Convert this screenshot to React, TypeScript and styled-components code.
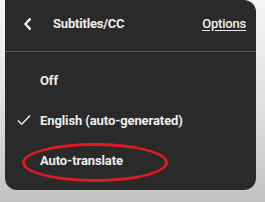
import React from "react";
import styled, { createGlobalStyle } from "styled-components";

const Global = createGlobalStyle`
  html, body { margin: 0; padding: 0; }
  body {
    width: 265px;
    height: 202px;
    overflow: hidden;
    background: linear-gradient(180deg, #f6f6f6 0%, #dedede 55%, #c2c2c2 100%);
    font-family: Roboto, "Liberation Sans", Arial, sans-serif;
  }
`;

const Stage = styled.div`
  width: 265px;
  height: 202px;
  box-sizing: border-box;
  padding: 0 9px 12px 5px;
  display: flex;
  flex-direction: column;
  position: relative;
`;

const Panel = styled.div`
  flex: 1;
  background: #2a2a2a;
  border-radius: 0 12px 12px 12px;
  display: flex;
  flex-direction: column;
  color: #eeeeee;
`;

const Header = styled.div`
  height: 52px;
  box-sizing: border-box;
  display: flex;
  align-items: center;
  padding: 0 10px 4px 18px;
  border-bottom: 1px solid #5a5a5a;
`;

const Back = styled.span`
  width: 20px;
  display: flex;
  align-items: center;
  margin-right: 10px;
`;

const Title = styled.span`
  flex: 1;
  font-size: 13px;
  font-weight: 700;
  letter-spacing: -0.2px;
`;

const Options = styled.span`
  font-size: 13px;
  font-weight: 500;
  letter-spacing: -0.2px;
  text-decoration: underline;
  text-underline-offset: 2px;
`;

const List = styled.div`
  display: flex;
  flex-direction: column;
  padding-top: 8px;
`;

const Item = styled.div`
  height: 40px;
  display: flex;
  align-items: center;
  padding-left: 12px;
  font-size: 13px;
  font-weight: 700;
  letter-spacing: -0.1px;
  position: relative;
`;

const Check = styled.span`
  width: 23px;
  display: flex;
  align-items: center;
`;

const Ellipse = styled.div`
  position: absolute;
  left: 17px;
  top: 3px;
  width: 146px;
  height: 39px;
  border: 3.5px solid #e01a22;
  border-radius: 50%;
  box-sizing: border-box;
`;

const Label = styled.span`
  position: relative;
`;

export default function App() {
  return (
    <>
      <Global />
      <Stage>
        <Panel>
          <Header>
            <Back>
              <svg width="10" height="14" viewBox="0 0 10 14">
                <path d="M7.5 1.5 L2.5 7 L7.5 12.5" fill="none" stroke="#f0f0f0" strokeWidth="2.4" />
              </svg>
            </Back>
            <Title>Subtitles/CC</Title>
            <Options>Options</Options>
          </Header>
          <List>
            <Item>
              <Check />
              <Label>Off</Label>
            </Item>
            <Item>
              <Check>
                <svg width="14" height="12" viewBox="0 0 14 12">
                  <path d="M1 6.5 L4.8 10.2 L13 1.5" fill="none" stroke="#e8e8e8" strokeWidth="1.6" />
                </svg>
              </Check>
              <Label>English (auto-generated)</Label>
            </Item>
            <Item>
              <Ellipse />
              <Check />
              <Label>Auto-translate</Label>
            </Item>
          </List>
        </Panel>
      </Stage>
    </>
  );
}
